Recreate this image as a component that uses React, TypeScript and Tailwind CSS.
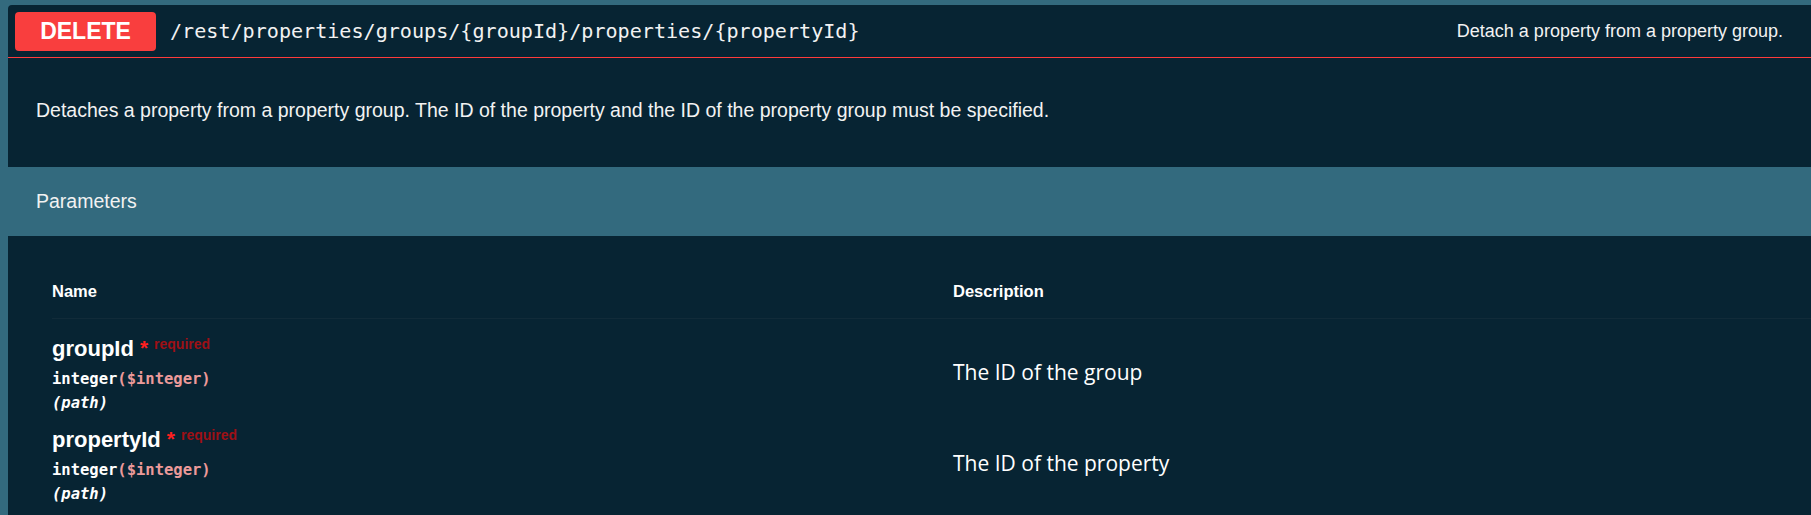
import React from "react";

const mono = { fontFamily: '"DejaVu Sans Mono", "Liberation Mono", monospace' };

function ParamRow({ name, desc }: { name: string; desc: string }) {
  return (
    <div className="flex items-center">
      <div className="w-[901px] shrink-0 flex flex-col">
        <div className="flex items-baseline leading-[26px]">
          <span className="text-[22px] font-bold text-white">{name}</span>
          <span className="ml-[6px] text-[21px] font-bold text-[#ff1f1f] relative -top-[1px]">*</span>
          <span className="ml-[6px] text-[14px] font-bold text-[#9e1015] relative -top-[7px]">required</span>
        </div>
        <div className="mt-[3px] text-[15.5px] leading-[24px] font-bold text-white" style={mono}>
          integer<span className="text-[#ec9a9a]">($integer)</span>
        </div>
        <div className="text-[15.5px] leading-[24px] font-bold italic text-white" style={mono}>
          (path)
        </div>
      </div>
      <div
        className="pb-[7px] text-[21px] leading-[28px] text-white"
        style={{ fontFamily: '"Open Sans", "Noto Sans", sans-serif' }}
      >
        {desc}
      </div>
    </div>
  );
}

export default function App() {
  return (
    <div
      className="h-[515px] w-full overflow-hidden bg-[#336a7e] pl-[8px] pt-[5px]"
      style={{ fontFamily: '"Liberation Sans", Arial, sans-serif' }}
    >
      <div className="h-full bg-[#072433] rounded-tl-[4px] flex flex-col">
        {/* Summary */}
        <div className="flex items-center h-[53px] pl-[7px] pr-[28px] border-b border-[#ff3b3b]">
          <div className="w-[141px] h-[39px] rounded-[4px] bg-[#f93e3e] flex items-center justify-center text-[23px] font-bold text-white">
            DELETE
          </div>
          <div className="ml-[14px] text-[20.1px] text-[#f2f2f2]" style={mono}>
            /rest/properties/groups/&#123;groupId&#125;/properties/&#123;propertyId&#125;
          </div>
          <div className="ml-auto text-[18px] text-[#f2f2f2]">Detach a property from a property group.</div>
        </div>

        {/* Description */}
        <div className="pl-[28px] pt-[40px] pb-[45px] text-[19.5px] leading-[24px] text-[#f2f2f2]">
          Detaches a property from a property group. The ID of the property and the ID of the property group must be
          specified.
        </div>

        {/* Parameters header */}
        <div className="h-[69px] bg-[#336a7e] flex items-center pl-[28px] text-[19.5px] text-[#f2f2f2]">
          Parameters
        </div>

        {/* Table */}
        <div className="pl-[44px] pt-[45px]">
          <div className="flex pb-[17px] border-b border-[#112b39] text-[16.5px] leading-[20px] font-bold text-white">
            <div className="w-[901px] shrink-0">Name</div>
            <div>Description</div>
          </div>
          <div className="flex flex-col gap-[12px] pt-[17px]">
            <ParamRow name="groupId" desc="The ID of the group" />
            <ParamRow name="propertyId" desc="The ID of the property" />
          </div>
        </div>
      </div>
    </div>
  );
}
